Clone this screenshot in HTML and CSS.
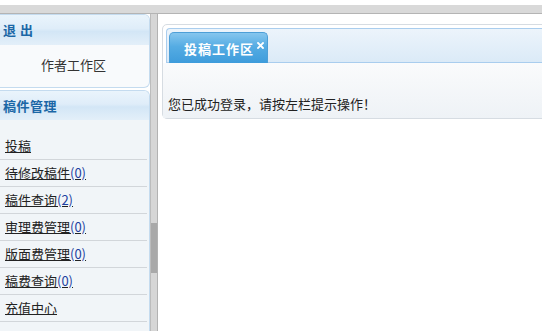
FILE: index.html
```html
<!DOCTYPE html>
<html lang="zh-CN">
<head>
  <meta charset="UTF-8">
  <meta name="viewport" content="width=device-width, initial-scale=1.0">
  <title>作者工作区</title>
  <link rel="stylesheet" href="styles.css">
</head>
<body>
  <div class="topbar"></div>
  <div class="main">
    <div class="sidebar">
      <div class="box">
        <div class="box-head">退&nbsp;出</div>
        <div class="box-body">作者工作区</div>
      </div>
      <div class="box box-menu">
        <div class="box-head">稿件管理</div>
        <ul class="menu">
          <li><a href="#">投稿</a></li>
          <li><a href="#">待修改稿件<span class="num">(0)</span></a></li>
          <li><a href="#">稿件查询<span class="num">(2)</span></a></li>
          <li><a href="#">审理费管理<span class="num">(0)</span></a></li>
          <li><a href="#">版面费管理<span class="num">(0)</span></a></li>
          <li><a href="#">稿费查询<span class="num">(0)</span></a></li>
          <li><a href="#">充值中心</a></li>
        </ul>
      </div>
    </div>
    <div class="splitter"><div class="thumb"></div></div>
    <div class="workarea">
      <div class="panel">
        <div class="tabs">
          <div class="tab">投稿工作区<svg class="close" width="7" height="7" viewBox="0 0 7 7"><path d="M1 1L6 6M6 1L1 6" stroke="#fff" stroke-width="1.8" stroke-linecap="square"/></svg></div>
        </div>
        <div class="panel-body">您已成功登录，请按左栏提示操作！</div>
      </div>
    </div>
  </div>
</body>
</html>
```

FILE: styles.css
```css
* {
  margin: 0;
  padding: 0;
  box-sizing: border-box;
}
html, body {
  height: 100%;
}
body {
  font-family: "Noto Sans CJK SC", "Liberation Sans", sans-serif;
  font-size: 13px;
  color: #222;
  background: #fff;
  overflow: hidden;
  display: flex;
  flex-direction: column;
}
.topbar {
  height: 14px;
  border-top: 5px solid #fff;
  background: #d9d9d9;
  border-bottom: 1px solid #b4b4b4;
  flex: none;
}
.main {
  flex: 1;
  display: flex;
  min-height: 0;
}

/* left column */
.sidebar {
  width: 150px;
  flex: none;
  overflow: hidden;
  background: #fff;
}
.box {
  border: 1px solid #c4dbef;
  border-left: none;
  border-radius: 0 6px 6px 0;
  background: #f8fafc;
  overflow: hidden;
}
.box-menu {
  margin-top: 2px;
  border-bottom: none;
  border-radius: 0 6px 0 0;
  background: #f1f5f8;
  height: 400px;
}
.box-head {
  height: 30px;
  line-height: 30px;
  padding-left: 3px;
  font-weight: bold;
  font-size: 13px;
  letter-spacing: 0.5px;
  color: #1b67a6;
  background: linear-gradient(#eaf4fc, #dfedf9 45%, #d3e6f6 55%, #e3eff9);
}
.box-menu .box-head {
  height: 29px;
  line-height: 29px;
}
.box-body {
  height: 42px;
  line-height: 40px;
  text-align: center;
  color: #333;
  padding-right: 2px;
}
.menu {
  list-style: none;
  padding-top: 13px;
}
.menu li {
  height: 27px;
  line-height: 26px;
  padding-left: 5px;
  border-bottom: 1px solid #d2d6da;
  margin-right: 2px;
}
.menu a {
  color: #222;
  text-decoration: underline;
}
.menu .num {
  color: #1d3fa0;
}

/* scrollbar-like splitter */
.splitter {
  width: 8px;
  flex: none;
  background: #d6d6d6;
  border-left: 1px solid #bcbcbc;
  border-right: 1px solid #b2b2b2;
}
.thumb {
  margin-top: 209px;
  height: 50px;
  background: #a9a9a9;
}

/* right work area */
.workarea {
  flex: 1;
  overflow: hidden;
  padding: 10px 0 0 4px;
}
.panel {
  width: calc(100% + 12px);
  border: 1px solid #d6dce2;
  border-radius: 5px;
  padding: 3px 3px 0;
  background: #fff;
}
.tabs {
  height: 35px;
  border: 1px solid #a9cdee;
  border-right: none;
  border-radius: 4px 0 0 0;
  background: linear-gradient(#ecf4fb, #dbeaf7);
  padding: 3px 0 0 2px;
}
.tab {
  width: 99px;
  height: 31px;
  line-height: 31px;
  padding-left: 14px;
  border: 1px solid #4d9fd7;
  border-bottom: none;
  border-radius: 5px 5px 0 0;
  background: linear-gradient(#86c6ee, #55ace3 45%, #3e9cdb);
  color: #fff;
  font-weight: bold;
  letter-spacing: 1px;
}
.close {
  vertical-align: top;
  margin-top: 9px;
  margin-left: 3px;
}
.panel-body {
  height: 55px;
  padding: 33px 0 0 2px;
  line-height: 16px;
  margin: 0 -3px;
  padding-left: 5px;
  background: linear-gradient(#fafbfc, #eef2f6);
}
```
